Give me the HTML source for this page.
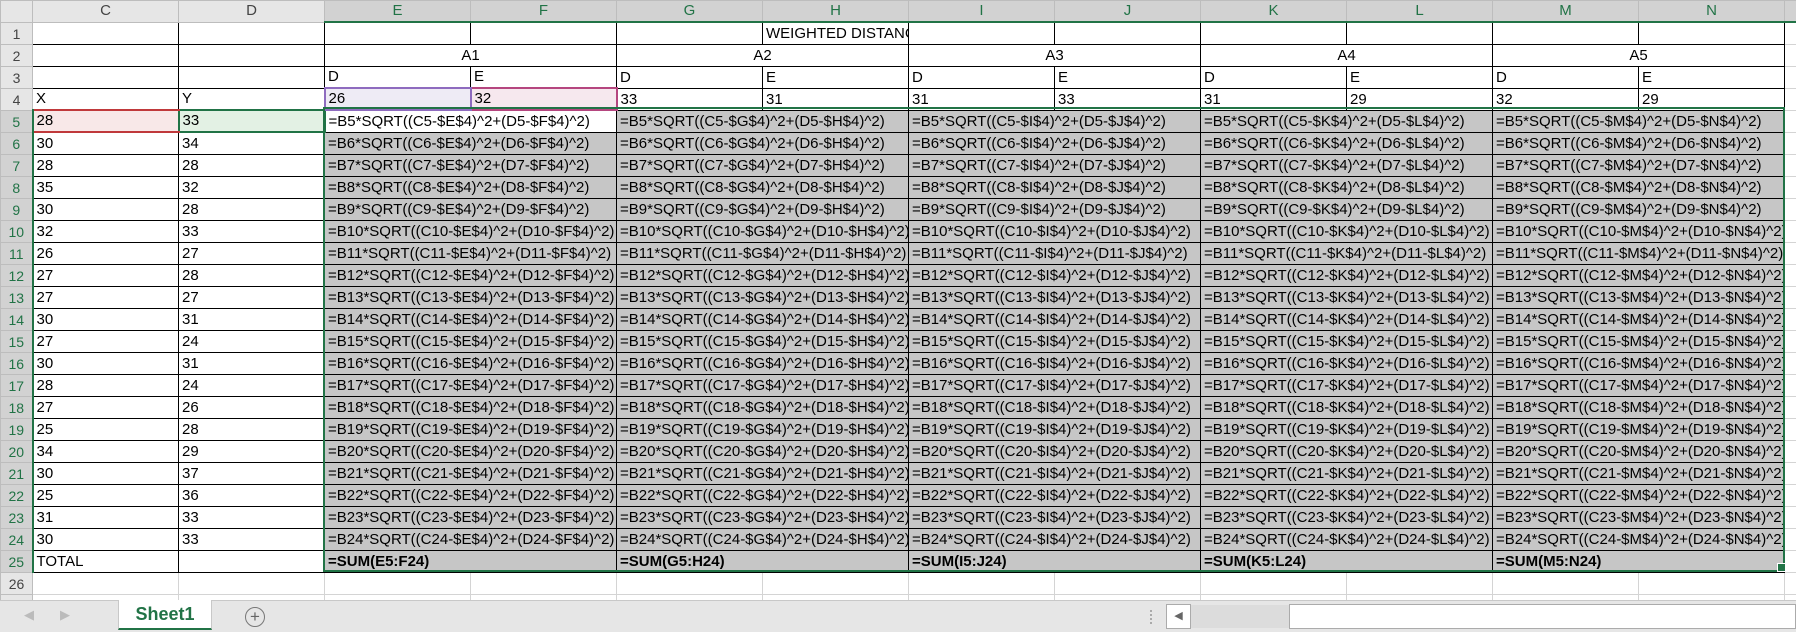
<!DOCTYPE html>
<html><head><meta charset="utf-8"><style>
body{margin:0;width:1796px;height:631px;overflow:hidden;background:#fff;font-family:"Liberation Sans",Calibri,sans-serif;position:relative}
table{border-collapse:collapse;table-layout:fixed;position:absolute;left:0;top:0;width:1796px}
td,th{height:21px;padding:0 0 0 3px;white-space:nowrap;overflow:hidden;font-size:15px;font-weight:normal;color:#000;border:1px solid #d4d4d4;vertical-align:bottom;line-height:20px;box-sizing:border-box}
th{height:20px;background:#e6e6e6;color:#444;text-align:center;padding:0;vertical-align:middle;border-color:#bdbdbd}
th.s{background:#d2d2d2;color:#217346;border-bottom:2px solid #217346}
td.rh{background:#e6e6e6;color:#444;text-align:center;padding:0;font-size:14px;border-color:#bdbdbd}
td.rs{background:#d2d2d2;color:#217346;border-right:2px solid #217346}
.k{border:1px solid #000}
.g{background:#c6c6c6}
.c{text-align:center;padding:0}
.b{font-weight:bold}
tr{height:22px}
#sel{position:absolute;left:323px;top:107px;width:1458px;height:461px;border:2px solid #217346;pointer-events:none}
#h{position:absolute;left:1777px;top:563px;width:7px;height:7px;background:#217346;border:1px solid #fff}
#bar{position:absolute;left:0;top:600px;width:1796px;height:31px;background:#e6e6e6;border-top:1px solid #c8c8c8}
</style></head><body>
<table>
<colgroup><col style="width:32px"><col span="12" style="width:146px"><col style="width:12px"></colgroup>
<tr style="height:20px"><th></th><th>C</th><th>D</th><th class="s">E</th><th class="s">F</th><th class="s">G</th><th class="s">H</th><th class="s">I</th><th class="s">J</th><th class="s">K</th><th class="s">L</th><th class="s">M</th><th class="s">N</th><th class="s"></th></tr>
<tr><td class="rh">1</td><td class="k"></td><td class="k"></td><td class="k"></td><td class="k"></td><td class="k"></td><td class="k">WEIGHTED DISTANCE</td><td class="k"></td><td class="k"></td><td class="k"></td><td class="k"></td><td class="k"></td><td class="k"></td><td></td></tr>
<tr><td class="rh">2</td><td class="k"></td><td class="k"></td><td class="k c" colspan="2">A1</td><td class="k c" colspan="2">A2</td><td class="k c" colspan="2">A3</td><td class="k c" colspan="2">A4</td><td class="k c" colspan="2">A5</td><td></td></tr>
<tr><td class="rh">3</td><td class="k"></td><td class="k"></td><td class="k">D</td><td class="k">E</td><td class="k">D</td><td class="k">E</td><td class="k">D</td><td class="k">E</td><td class="k">D</td><td class="k">E</td><td class="k">D</td><td class="k">E</td><td></td></tr>
<tr><td class="rh">4</td><td class="k">X</td><td class="k">Y</td><td class="k" style="background:#eeebf5;border:2px solid #8e6bbf">26</td><td class="k" style="background:#f6e8ee;border:2px solid #b5467f">32</td><td class="k">33</td><td class="k">31</td><td class="k">31</td><td class="k">33</td><td class="k">31</td><td class="k">29</td><td class="k">32</td><td class="k">29</td><td></td></tr>
<tr><td class="rh rs">5</td><td class="k" style="background:#f8e8e8;border-top:2px solid #c0393b;border-bottom:2px solid #c0393b">28</td><td class="k" style="background:#e3f1e4;border:2px solid #217346">33</td><td class="k" colspan="2" style="background:#fff">=B5*SQRT((C5-$E$4)^2+(D5-$F$4)^2)</td><td class="k g" colspan="2">=B5*SQRT((C5-$G$4)^2+(D5-$H$4)^2)</td><td class="k g" colspan="2">=B5*SQRT((C5-$I$4)^2+(D5-$J$4)^2)</td><td class="k g" colspan="2">=B5*SQRT((C5-$K$4)^2+(D5-$L$4)^2)</td><td class="k g" colspan="2">=B5*SQRT((C5-$M$4)^2+(D5-$N$4)^2)</td><td></td></tr>
<tr><td class="rh rs">6</td><td class="k">30</td><td class="k">34</td><td class="k g" colspan="2">=B6*SQRT((C6-$E$4)^2+(D6-$F$4)^2)</td><td class="k g" colspan="2">=B6*SQRT((C6-$G$4)^2+(D6-$H$4)^2)</td><td class="k g" colspan="2">=B6*SQRT((C6-$I$4)^2+(D6-$J$4)^2)</td><td class="k g" colspan="2">=B6*SQRT((C6-$K$4)^2+(D6-$L$4)^2)</td><td class="k g" colspan="2">=B6*SQRT((C6-$M$4)^2+(D6-$N$4)^2)</td><td></td></tr>
<tr><td class="rh rs">7</td><td class="k">28</td><td class="k">28</td><td class="k g" colspan="2">=B7*SQRT((C7-$E$4)^2+(D7-$F$4)^2)</td><td class="k g" colspan="2">=B7*SQRT((C7-$G$4)^2+(D7-$H$4)^2)</td><td class="k g" colspan="2">=B7*SQRT((C7-$I$4)^2+(D7-$J$4)^2)</td><td class="k g" colspan="2">=B7*SQRT((C7-$K$4)^2+(D7-$L$4)^2)</td><td class="k g" colspan="2">=B7*SQRT((C7-$M$4)^2+(D7-$N$4)^2)</td><td></td></tr>
<tr><td class="rh rs">8</td><td class="k">35</td><td class="k">32</td><td class="k g" colspan="2">=B8*SQRT((C8-$E$4)^2+(D8-$F$4)^2)</td><td class="k g" colspan="2">=B8*SQRT((C8-$G$4)^2+(D8-$H$4)^2)</td><td class="k g" colspan="2">=B8*SQRT((C8-$I$4)^2+(D8-$J$4)^2)</td><td class="k g" colspan="2">=B8*SQRT((C8-$K$4)^2+(D8-$L$4)^2)</td><td class="k g" colspan="2">=B8*SQRT((C8-$M$4)^2+(D8-$N$4)^2)</td><td></td></tr>
<tr><td class="rh rs">9</td><td class="k">30</td><td class="k">28</td><td class="k g" colspan="2">=B9*SQRT((C9-$E$4)^2+(D9-$F$4)^2)</td><td class="k g" colspan="2">=B9*SQRT((C9-$G$4)^2+(D9-$H$4)^2)</td><td class="k g" colspan="2">=B9*SQRT((C9-$I$4)^2+(D9-$J$4)^2)</td><td class="k g" colspan="2">=B9*SQRT((C9-$K$4)^2+(D9-$L$4)^2)</td><td class="k g" colspan="2">=B9*SQRT((C9-$M$4)^2+(D9-$N$4)^2)</td><td></td></tr>
<tr><td class="rh rs">10</td><td class="k">32</td><td class="k">33</td><td class="k g" colspan="2">=B10*SQRT((C10-$E$4)^2+(D10-$F$4)^2)</td><td class="k g" colspan="2">=B10*SQRT((C10-$G$4)^2+(D10-$H$4)^2)</td><td class="k g" colspan="2">=B10*SQRT((C10-$I$4)^2+(D10-$J$4)^2)</td><td class="k g" colspan="2">=B10*SQRT((C10-$K$4)^2+(D10-$L$4)^2)</td><td class="k g" colspan="2">=B10*SQRT((C10-$M$4)^2+(D10-$N$4)^2)</td><td></td></tr>
<tr><td class="rh rs">11</td><td class="k">26</td><td class="k">27</td><td class="k g" colspan="2">=B11*SQRT((C11-$E$4)^2+(D11-$F$4)^2)</td><td class="k g" colspan="2">=B11*SQRT((C11-$G$4)^2+(D11-$H$4)^2)</td><td class="k g" colspan="2">=B11*SQRT((C11-$I$4)^2+(D11-$J$4)^2)</td><td class="k g" colspan="2">=B11*SQRT((C11-$K$4)^2+(D11-$L$4)^2)</td><td class="k g" colspan="2">=B11*SQRT((C11-$M$4)^2+(D11-$N$4)^2)</td><td></td></tr>
<tr><td class="rh rs">12</td><td class="k">27</td><td class="k">28</td><td class="k g" colspan="2">=B12*SQRT((C12-$E$4)^2+(D12-$F$4)^2)</td><td class="k g" colspan="2">=B12*SQRT((C12-$G$4)^2+(D12-$H$4)^2)</td><td class="k g" colspan="2">=B12*SQRT((C12-$I$4)^2+(D12-$J$4)^2)</td><td class="k g" colspan="2">=B12*SQRT((C12-$K$4)^2+(D12-$L$4)^2)</td><td class="k g" colspan="2">=B12*SQRT((C12-$M$4)^2+(D12-$N$4)^2)</td><td></td></tr>
<tr><td class="rh rs">13</td><td class="k">27</td><td class="k">27</td><td class="k g" colspan="2">=B13*SQRT((C13-$E$4)^2+(D13-$F$4)^2)</td><td class="k g" colspan="2">=B13*SQRT((C13-$G$4)^2+(D13-$H$4)^2)</td><td class="k g" colspan="2">=B13*SQRT((C13-$I$4)^2+(D13-$J$4)^2)</td><td class="k g" colspan="2">=B13*SQRT((C13-$K$4)^2+(D13-$L$4)^2)</td><td class="k g" colspan="2">=B13*SQRT((C13-$M$4)^2+(D13-$N$4)^2)</td><td></td></tr>
<tr><td class="rh rs">14</td><td class="k">30</td><td class="k">31</td><td class="k g" colspan="2">=B14*SQRT((C14-$E$4)^2+(D14-$F$4)^2)</td><td class="k g" colspan="2">=B14*SQRT((C14-$G$4)^2+(D14-$H$4)^2)</td><td class="k g" colspan="2">=B14*SQRT((C14-$I$4)^2+(D14-$J$4)^2)</td><td class="k g" colspan="2">=B14*SQRT((C14-$K$4)^2+(D14-$L$4)^2)</td><td class="k g" colspan="2">=B14*SQRT((C14-$M$4)^2+(D14-$N$4)^2)</td><td></td></tr>
<tr><td class="rh rs">15</td><td class="k">27</td><td class="k">24</td><td class="k g" colspan="2">=B15*SQRT((C15-$E$4)^2+(D15-$F$4)^2)</td><td class="k g" colspan="2">=B15*SQRT((C15-$G$4)^2+(D15-$H$4)^2)</td><td class="k g" colspan="2">=B15*SQRT((C15-$I$4)^2+(D15-$J$4)^2)</td><td class="k g" colspan="2">=B15*SQRT((C15-$K$4)^2+(D15-$L$4)^2)</td><td class="k g" colspan="2">=B15*SQRT((C15-$M$4)^2+(D15-$N$4)^2)</td><td></td></tr>
<tr><td class="rh rs">16</td><td class="k">30</td><td class="k">31</td><td class="k g" colspan="2">=B16*SQRT((C16-$E$4)^2+(D16-$F$4)^2)</td><td class="k g" colspan="2">=B16*SQRT((C16-$G$4)^2+(D16-$H$4)^2)</td><td class="k g" colspan="2">=B16*SQRT((C16-$I$4)^2+(D16-$J$4)^2)</td><td class="k g" colspan="2">=B16*SQRT((C16-$K$4)^2+(D16-$L$4)^2)</td><td class="k g" colspan="2">=B16*SQRT((C16-$M$4)^2+(D16-$N$4)^2)</td><td></td></tr>
<tr><td class="rh rs">17</td><td class="k">28</td><td class="k">24</td><td class="k g" colspan="2">=B17*SQRT((C17-$E$4)^2+(D17-$F$4)^2)</td><td class="k g" colspan="2">=B17*SQRT((C17-$G$4)^2+(D17-$H$4)^2)</td><td class="k g" colspan="2">=B17*SQRT((C17-$I$4)^2+(D17-$J$4)^2)</td><td class="k g" colspan="2">=B17*SQRT((C17-$K$4)^2+(D17-$L$4)^2)</td><td class="k g" colspan="2">=B17*SQRT((C17-$M$4)^2+(D17-$N$4)^2)</td><td></td></tr>
<tr><td class="rh rs">18</td><td class="k">27</td><td class="k">26</td><td class="k g" colspan="2">=B18*SQRT((C18-$E$4)^2+(D18-$F$4)^2)</td><td class="k g" colspan="2">=B18*SQRT((C18-$G$4)^2+(D18-$H$4)^2)</td><td class="k g" colspan="2">=B18*SQRT((C18-$I$4)^2+(D18-$J$4)^2)</td><td class="k g" colspan="2">=B18*SQRT((C18-$K$4)^2+(D18-$L$4)^2)</td><td class="k g" colspan="2">=B18*SQRT((C18-$M$4)^2+(D18-$N$4)^2)</td><td></td></tr>
<tr><td class="rh rs">19</td><td class="k">25</td><td class="k">28</td><td class="k g" colspan="2">=B19*SQRT((C19-$E$4)^2+(D19-$F$4)^2)</td><td class="k g" colspan="2">=B19*SQRT((C19-$G$4)^2+(D19-$H$4)^2)</td><td class="k g" colspan="2">=B19*SQRT((C19-$I$4)^2+(D19-$J$4)^2)</td><td class="k g" colspan="2">=B19*SQRT((C19-$K$4)^2+(D19-$L$4)^2)</td><td class="k g" colspan="2">=B19*SQRT((C19-$M$4)^2+(D19-$N$4)^2)</td><td></td></tr>
<tr><td class="rh rs">20</td><td class="k">34</td><td class="k">29</td><td class="k g" colspan="2">=B20*SQRT((C20-$E$4)^2+(D20-$F$4)^2)</td><td class="k g" colspan="2">=B20*SQRT((C20-$G$4)^2+(D20-$H$4)^2)</td><td class="k g" colspan="2">=B20*SQRT((C20-$I$4)^2+(D20-$J$4)^2)</td><td class="k g" colspan="2">=B20*SQRT((C20-$K$4)^2+(D20-$L$4)^2)</td><td class="k g" colspan="2">=B20*SQRT((C20-$M$4)^2+(D20-$N$4)^2)</td><td></td></tr>
<tr><td class="rh rs">21</td><td class="k">30</td><td class="k">37</td><td class="k g" colspan="2">=B21*SQRT((C21-$E$4)^2+(D21-$F$4)^2)</td><td class="k g" colspan="2">=B21*SQRT((C21-$G$4)^2+(D21-$H$4)^2)</td><td class="k g" colspan="2">=B21*SQRT((C21-$I$4)^2+(D21-$J$4)^2)</td><td class="k g" colspan="2">=B21*SQRT((C21-$K$4)^2+(D21-$L$4)^2)</td><td class="k g" colspan="2">=B21*SQRT((C21-$M$4)^2+(D21-$N$4)^2)</td><td></td></tr>
<tr><td class="rh rs">22</td><td class="k">25</td><td class="k">36</td><td class="k g" colspan="2">=B22*SQRT((C22-$E$4)^2+(D22-$F$4)^2)</td><td class="k g" colspan="2">=B22*SQRT((C22-$G$4)^2+(D22-$H$4)^2)</td><td class="k g" colspan="2">=B22*SQRT((C22-$I$4)^2+(D22-$J$4)^2)</td><td class="k g" colspan="2">=B22*SQRT((C22-$K$4)^2+(D22-$L$4)^2)</td><td class="k g" colspan="2">=B22*SQRT((C22-$M$4)^2+(D22-$N$4)^2)</td><td></td></tr>
<tr><td class="rh rs">23</td><td class="k">31</td><td class="k">33</td><td class="k g" colspan="2">=B23*SQRT((C23-$E$4)^2+(D23-$F$4)^2)</td><td class="k g" colspan="2">=B23*SQRT((C23-$G$4)^2+(D23-$H$4)^2)</td><td class="k g" colspan="2">=B23*SQRT((C23-$I$4)^2+(D23-$J$4)^2)</td><td class="k g" colspan="2">=B23*SQRT((C23-$K$4)^2+(D23-$L$4)^2)</td><td class="k g" colspan="2">=B23*SQRT((C23-$M$4)^2+(D23-$N$4)^2)</td><td></td></tr>
<tr><td class="rh rs">24</td><td class="k">30</td><td class="k">33</td><td class="k g" colspan="2">=B24*SQRT((C24-$E$4)^2+(D24-$F$4)^2)</td><td class="k g" colspan="2">=B24*SQRT((C24-$G$4)^2+(D24-$H$4)^2)</td><td class="k g" colspan="2">=B24*SQRT((C24-$I$4)^2+(D24-$J$4)^2)</td><td class="k g" colspan="2">=B24*SQRT((C24-$K$4)^2+(D24-$L$4)^2)</td><td class="k g" colspan="2">=B24*SQRT((C24-$M$4)^2+(D24-$N$4)^2)</td><td></td></tr>
<tr><td class="rh rs">25</td><td class="k">TOTAL</td><td class="k"></td><td class="k g b" colspan="2">=SUM(E5:F24)</td><td class="k g b" colspan="2">=SUM(G5:H24)</td><td class="k g b" colspan="2">=SUM(I5:J24)</td><td class="k g b" colspan="2">=SUM(K5:L24)</td><td class="k g b" colspan="2">=SUM(M5:N24)</td><td></td></tr>
<tr><td class="rh">26</td><td></td><td></td><td></td><td></td><td></td><td></td><td></td><td></td><td></td><td></td><td></td><td></td><td></td></tr>
<tr><td class="rh">27</td><td></td><td></td><td></td><td></td><td></td><td></td><td></td><td></td><td></td><td></td><td></td><td></td><td></td></tr>
</table>
<div id="sel"></div><div id="h"></div>
<div id="bar">
<span style="position:absolute;left:24px;top:6px;color:#bbb;font-size:13px">◀</span>
<span style="position:absolute;left:60px;top:6px;color:#bbb;font-size:13px">▶</span>
<div style="position:absolute;left:118px;top:-1px;width:94px;height:30px;background:#fff;border-left:1px solid #c8c8c8;border-right:1px solid #c8c8c8;border-bottom:2px solid #217346;box-sizing:border-box;text-align:center;color:#217346;font-weight:bold;font-size:18px;line-height:28px">Sheet1</div>
<div style="position:absolute;left:245px;top:6px;width:18px;height:18px;border:1px solid #777;border-radius:50%;text-align:center;line-height:18px;color:#666;font-size:17px">+</div>
<div style="position:absolute;left:1150px;top:9px;width:2px;height:14px;border-left:2px dotted #aaa"></div>
<div style="position:absolute;left:1166px;top:3px;width:25px;height:25px;background:#fff;border:1px solid #ababab;box-sizing:border-box;text-align:center;line-height:23px;color:#666;font-size:11px">◀</div>
<div style="position:absolute;left:1191px;top:4px;width:98px;height:23px;background:#dcdcdc"></div>
<div style="position:absolute;left:1289px;top:3px;width:507px;height:25px;background:#fff;border:1px solid #ababab;box-sizing:border-box"></div>
</div>
</body></html>
